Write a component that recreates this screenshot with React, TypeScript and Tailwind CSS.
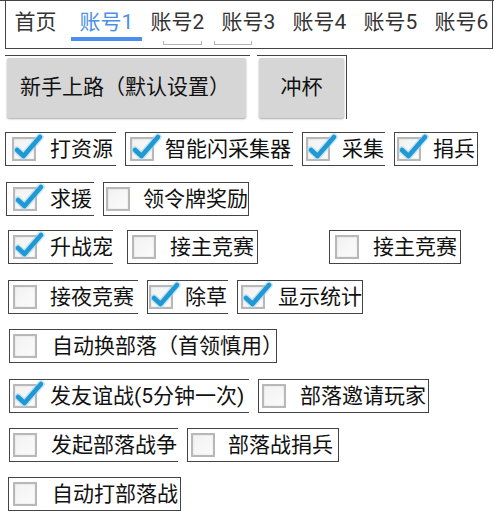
import React from "react";

type Item = { w: number; ml: number; pl: number; tx: number; checked: boolean; label: string; r?: boolean };
type Row = { mt: number; items: Item[] };

const rows: Row[] = [
  {
    mt: 13,
    items: [
      { ml: 5, w: 111, pl: 7, tx: 45, checked: true, label: "打资源" },
      { ml: 9, w: 168, pl: 5, tx: 40, checked: true, label: "智能闪采集器" },
      { ml: 9, w: 83, pl: 4, tx: 40, checked: true, label: "采集" },
      { ml: 9, w: 84, pl: 3, tx: 39, checked: true, label: "捐兵", r: true },
    ],
  },
  {
    mt: 16,
    items: [
      { ml: 6, w: 88, pl: 7, tx: 44, checked: true, label: "求援" },
      { ml: 9, w: 146, pl: 3, tx: 40, checked: false, label: "领令牌奖励", r: true },
    ],
  },
  {
    mt: 14,
    items: [
      { ml: 8, w: 105, pl: 5, tx: 42, checked: true, label: "升战宠" },
      { ml: 14, w: 131, pl: 5, tx: 43, checked: false, label: "接主竞赛", r: true },
      { ml: 71, w: 132, pl: 6, tx: 44, checked: false, label: "接主竞赛", r: true },
    ],
  },
  {
    mt: 16,
    items: [
      { ml: 8, w: 130, pl: 5, tx: 42, checked: false, label: "接夜竞赛" },
      { ml: 9, w: 81, pl: 2, tx: 38, checked: true, label: "除草" },
      { ml: 9, w: 126, pl: 4, tx: 41, checked: true, label: "显示统计", r: true },
    ],
  },
  {
    mt: 15,
    items: [{ ml: 9, w: 268, pl: 4, tx: 43, checked: false, label: "自动换部落（首领慎用）", r: true }],
  },
  {
    mt: 16,
    items: [
      { ml: 9, w: 240, pl: 4, tx: 41, checked: true, label: "发友谊战(5分钟一次)" },
      { ml: 9, w: 171, pl: 4, tx: 42, checked: false, label: "部落邀请玩家", r: true },
    ],
  },
  {
    mt: 15,
    items: [
      { ml: 9, w: 169, pl: 4, tx: 42, checked: false, label: "发起部落战争" },
      { ml: 9, w: 152, pl: 4, tx: 41, checked: false, label: "部落战捐兵", r: true },
    ],
  },
  {
    mt: 15,
    items: [{ ml: 8, w: 173, pl: 5, tx: 44, checked: false, label: "自动打部落战", r: true }],
  },
];

function Check({ checked }: { checked: boolean }) {
  return (
    <div className="relative w-[24px] h-[24px] shrink-0 border-2 border-[#b8b8b8] bg-gradient-to-br from-[#f2f2f2] to-[#fbfbfb] shadow-[inset_0_0_2px_rgba(0,0,0,0.12)]">
      {checked && (
        <svg
          className="absolute left-[-1px] top-[-7px] overflow-visible"
          width="30"
          height="30"
          viewBox="0 0 30 30"
        >
          <path
            d="M4 18 L10.5 24 L27 5"
            fill="none"
            stroke="#9fd6f2"
            strokeWidth="7.5"
            strokeLinecap="round"
            strokeLinejoin="round"
            opacity="0.55"
          />
          <path
            d="M4 18 L10.5 24 L27 5"
            fill="none"
            stroke="#1f98d3"
            strokeWidth="4.6"
            strokeLinecap="round"
            strokeLinejoin="round"
          />
        </svg>
      )}
    </div>
  );
}

const tabs = ["首页", "账号1", "账号2", "账号3", "账号4", "账号5", "账号6"];

export default function App() {
  return (
    <div className="w-[494px] h-[516px] bg-white overflow-hidden font-['Roboto','Noto_Sans_CJK_SC',sans-serif] text-[#111]">
      {/* Tab bar */}
      <div className="border-t border-[#444]">
        <div className="relative ml-[5px] w-[488px] h-[48px] border-l border-r border-b border-[#444]">
          <div className="flex -ml-[6px] pt-[6px]">
            {tabs.map((t, i) => (
              <div
                key={t}
                className={
                  "w-[71px] shrink-0 text-center text-[21px] leading-[30px] " +
                  (i === 1 ? "text-[#4a90e6]" : "text-[#333]")
                }
              >
                {t}
              </div>
            ))}
          </div>
          <div className="absolute left-[65px] top-[36px] w-[71px] h-[4px] bg-[#4a8ff0]" />
          <div className="absolute left-[157px] top-[40px] w-[39px] h-[4px] border-l border-r border-b border-[#b5b5b5]" />
          <div className="absolute left-[208px] top-[40px] w-[38px] h-[4px] border-l border-r border-b border-[#b5b5b5]" />
        </div>
      </div>

      {/* Buttons */}
      <div className="flex mt-[6px] ml-[5px]">
        <div className="w-[245px] h-[64px] border-t border-[#444]">
          <div className="ml-[2px] mt-[2px] w-[239px] h-[60px] bg-[#d6d6d6] rounded-[2px] shadow-[0_1px_2px_rgba(0,0,0,0.35)] flex items-center pl-[13px] text-[21px] text-[#111]">
            新手上路（默认设置）
          </div>
        </div>
        <div className="ml-[7px] w-[90px] h-[64px] border-t border-r border-[#444]">
          <div className="ml-[2px] mt-[2px] w-[85px] h-[60px] bg-[#d6d6d6] rounded-[2px] shadow-[0_1px_2px_rgba(0,0,0,0.35)] flex items-center justify-center text-[21px] text-[#111]">
            冲杯
          </div>
        </div>
      </div>

      {/* Checkbox rows */}
      {rows.map((row, ri) => (
        <div key={ri} className="flex" style={{ marginTop: row.mt }}>
          {row.items.map((it, ii) => (
            <div
              key={ii}
              className={
                "h-[34px] shrink-0 flex items-center border-l border-t border-b border-[#444] " +
                (it.r ? "border-r" : "")
              }
              style={{ marginLeft: it.ml, width: it.w, paddingLeft: it.pl - 1 }}
            >
              <Check checked={it.checked} />
              <span
                className="whitespace-nowrap text-[21px] leading-[24px] text-[#111]"
                style={{ marginLeft: it.tx - it.pl - 24 }}
              >
                {it.label}
              </span>
            </div>
          ))}
        </div>
      ))}
    </div>
  );
}
